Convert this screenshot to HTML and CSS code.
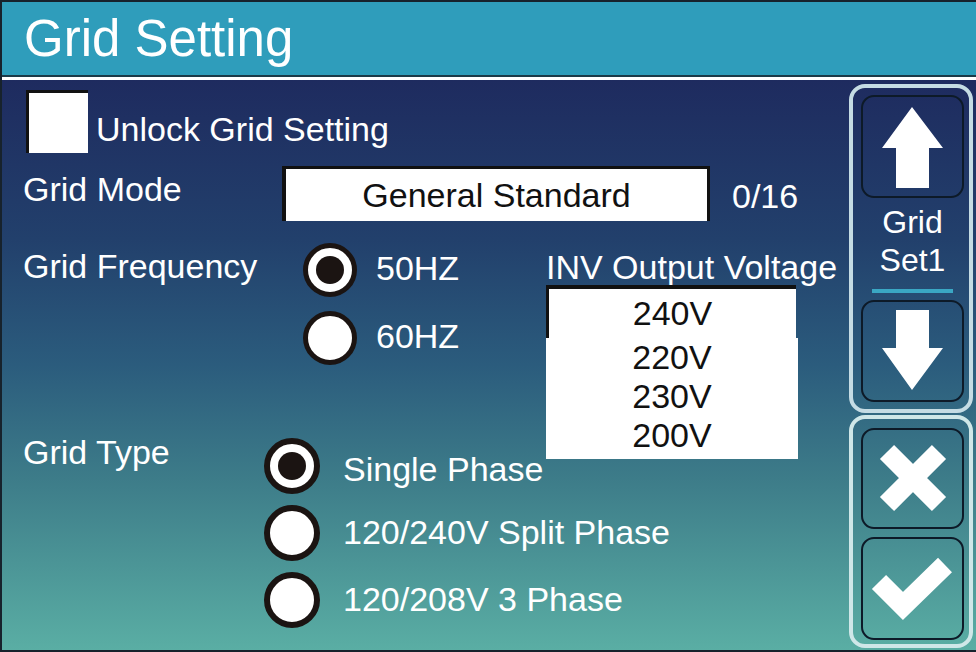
FILE: index.html
```html
<!DOCTYPE html>
<html lang="en">
<head>
<meta charset="utf-8">
<title>Grid Setting</title>
<link rel="stylesheet" href="styles.css">
</head>
<body>
<div class="screen">
  <header class="title-bar"><h1>Grid Setting</h1></header>
  <div class="sep"></div>
  <main class="body">
    <section class="form">
      <div class="row unlock">
        <span class="checkbox"></span>
        <span class="label unlock-label">Unlock Grid Setting</span>
      </div>
      <div class="row mode">
        <span class="label w-mode">Grid Mode</span>
        <div class="select-box">General Standard</div>
        <span class="label count">0/16</span>
      </div>
      <div class="row freq">
        <span class="label w-freq">Grid Frequency</span>
        <div class="radios freq-radios">
          <div class="opt"><span class="radio on"></span><span class="opt-text">50HZ</span></div>
          <div class="opt"><span class="radio"></span><span class="opt-text">60HZ</span></div>
        </div>
        <div class="volt">
          <div class="volt-title">INV Output Voltage</div>
          <div class="dropdown">
            <div class="dd-current">240V</div>
            <ul class="dd-list">
              <li>220V</li>
              <li>230V</li>
              <li>200V</li>
            </ul>
          </div>
        </div>
      </div>
      <div class="row type">
        <span class="label w-type">Grid Type</span>
        <div class="radios type-radios">
          <div class="opt"><span class="radio big on"></span><span class="opt-text first">Single Phase</span></div>
          <div class="opt"><span class="radio big"></span><span class="opt-text">120/240V Split Phase</span></div>
          <div class="opt"><span class="radio big"></span><span class="opt-text">120/208V 3 Phase</span></div>
        </div>
      </div>
    </section>
    <aside class="side">
      <div class="group nav">
        <div class="btn h103">
          <svg width="99" height="99" viewBox="0 0 99 99"><polygon points="49,10 80,51 66,51 66,91 33,91 33,51 19,51" fill="#fff"/></svg>
        </div>
        <div class="set-name">Grid<br>Set1</div>
        <div class="set-line"></div>
        <div class="btn h102">
          <svg width="99" height="98" viewBox="0 0 99 98"><polygon points="33,8 66,8 66,46 80,46 49,88 19,46 33,46" fill="#fff"/></svg>
        </div>
      </div>
      <div class="group actions">
        <div class="btn h101">
          <svg width="99" height="97" viewBox="0 0 99 97"><path d="M24 22 L76 74 M76 22 L24 74" stroke="#fff" stroke-width="20" fill="none"/></svg>
        </div>
        <div class="btn h103 ok">
          <svg width="99" height="99" viewBox="0 0 99 99"><polyline points="16,43 40,67 82,26" stroke="#fff" stroke-width="20" fill="none" stroke-linejoin="miter"/></svg>
        </div>
      </div>
    </aside>
  </main>
</div>
</body>
</html>
```
FILE: styles.css
```css
html, body {
  margin: 0;
  padding: 0;
  background: #17222c;
}

.screen {
  width: 976px;
  height: 652px;
  box-sizing: border-box;
  border: 2px solid #17222c;
  border-right: 0;
  display: flex;
  flex-direction: column;
  overflow: hidden;
  font-family: "Liberation Sans", Arial, sans-serif;
}

.title-bar {
  height: 73px;
  flex: none;
  background: #2f9dbb;
  border-bottom: 2px solid #1c3a48;
  display: flex;
  align-items: center;
  padding-left: 22px;
}

.title-bar h1 {
  margin: 0;
  font-size: 51px;
  font-weight: normal;
  line-height: 1;
  color: #fff;
}

.sep {
  height: 3px;
  flex: none;
  background: #fff;
}

.body {
  flex: 1;
  display: flex;
  background: linear-gradient(to bottom, #1e2b5f 0%, #22406c 28%, #2b5c7d 50%, #3d7c89 70%, #5aaea4 100%);
}

.form {
  flex: 1;
  padding: 10px 0 0 21px;
  color: #fff;
  font-size: 34px;
}

.row {
  display: flex;
  align-items: flex-start;
}

.label {
  line-height: 40px;
  white-space: nowrap;
}

/* row 1 */
.checkbox {
  width: 59px;
  height: 60px;
  margin-left: 3px;
  background: #fff;
  border-left: 3px solid #111;
  border-top: 3px solid #111;
  flex: none;
}

.unlock-label {
  margin: 19px 0 0 8px;
}

/* row 2 */
.mode {
  margin-top: 13px;
}

.w-mode {
  width: 259px;
  margin-top: 3px;
}

.select-box {
  width: 421px;
  height: 52px;
  background: #fff;
  border-top: 3px solid #111;
  border-left: 4px solid #111;
  border-right: 3px solid #111;
  color: #111;
  display: flex;
  align-items: center;
  justify-content: center;
  flex: none;
}

.count {
  margin: 10px 0 0 22px;
}

/* row 3 */
.freq {
  margin-top: 22px;
}

.w-freq {
  width: 280px;
  margin-top: 3px;
}

.radios {
  display: flex;
  flex-direction: column;
}

.freq-radios {
  width: 243px;
  gap: 14px;
}

.opt {
  display: flex;
  align-items: center;
}

.radio {
  width: 44px;
  height: 44px;
  border: 5px solid #1b1412;
  border-radius: 50%;
  background: #fff;
  display: flex;
  align-items: center;
  justify-content: center;
  flex: none;
}

.radio.on::after {
  content: "";
  width: 28px;
  height: 28px;
  border-radius: 50%;
  background: #1b1412;
}

.opt-text {
  line-height: 40px;
  white-space: nowrap;
  margin-left: 19px;
  margin-top: -4px;
}

.volt {
  display: flex;
  flex-direction: column;
}

.volt-title {
  margin-top: 6px;
  line-height: 36px;
  white-space: nowrap;
}

.dropdown {
  position: relative;
  width: 250px;
}

.dd-current {
  height: 49px;
  background: #fff;
  border-top: 4px solid #111;
  border-left: 3px solid #111;
  color: #111;
  display: flex;
  align-items: center;
  justify-content: center;
}

.dd-list {
  position: absolute;
  left: 0;
  top: 53px;
  width: 252px;
  margin: 0;
  padding: 0 0 4px;
  list-style: none;
  background: #fff;
  color: #111;
  text-align: center;
}

.dd-list li {
  line-height: 39px;
  height: 39px;
}

/* row 4 */
.type {
  margin-top: 67px;
}

.w-type {
  width: 241px;
}

.type-radios {
  margin-top: 6px;
  gap: 11px;
}

.radio.big {
  width: 44px;
  height: 44px;
  border-width: 6px;
}

.type-radios .opt-text {
  margin-left: 23px;
  margin-top: -2px;
}

.type-radios .opt-text.first {
  margin-top: 6px;
}

/* side panel */
.side {
  width: 124px;
  flex: none;
  margin-right: 3px;
  padding-top: 4px;
  display: flex;
  flex-direction: column;
  gap: 2px;
}

.group {
  box-sizing: border-box;
  width: 124px;
  border: 4px solid #c5dce4;
  border-radius: 16px;
  padding: 0 5px 0 8px;
  display: flex;
  flex-direction: column;
  align-items: center;
}

.nav {
  height: 329px;
  padding-top: 7px;
}

.actions {
  height: 233px;
  padding-top: 9px;
  gap: 8px;
  border-color: #cfe7e8;
}

.btn {
  box-sizing: border-box;
  width: 103px;
  border: 2px solid #0d1a28;
  border-radius: 13px;
  display: flex;
  flex: none;
}

.btn svg {
  display: block;
}

.h103 { height: 103px; }
.h102 { height: 102px; }
.h101 { height: 101px; }

.set-name {
  margin-top: 5px;
  color: #fff;
  font-size: 32px;
  line-height: 38px;
  text-align: center;
}

.set-line {
  width: 81px;
  height: 4px;
  margin-top: 10px;
  margin-bottom: 7px;
  background: #3aa7c4;
}
```
